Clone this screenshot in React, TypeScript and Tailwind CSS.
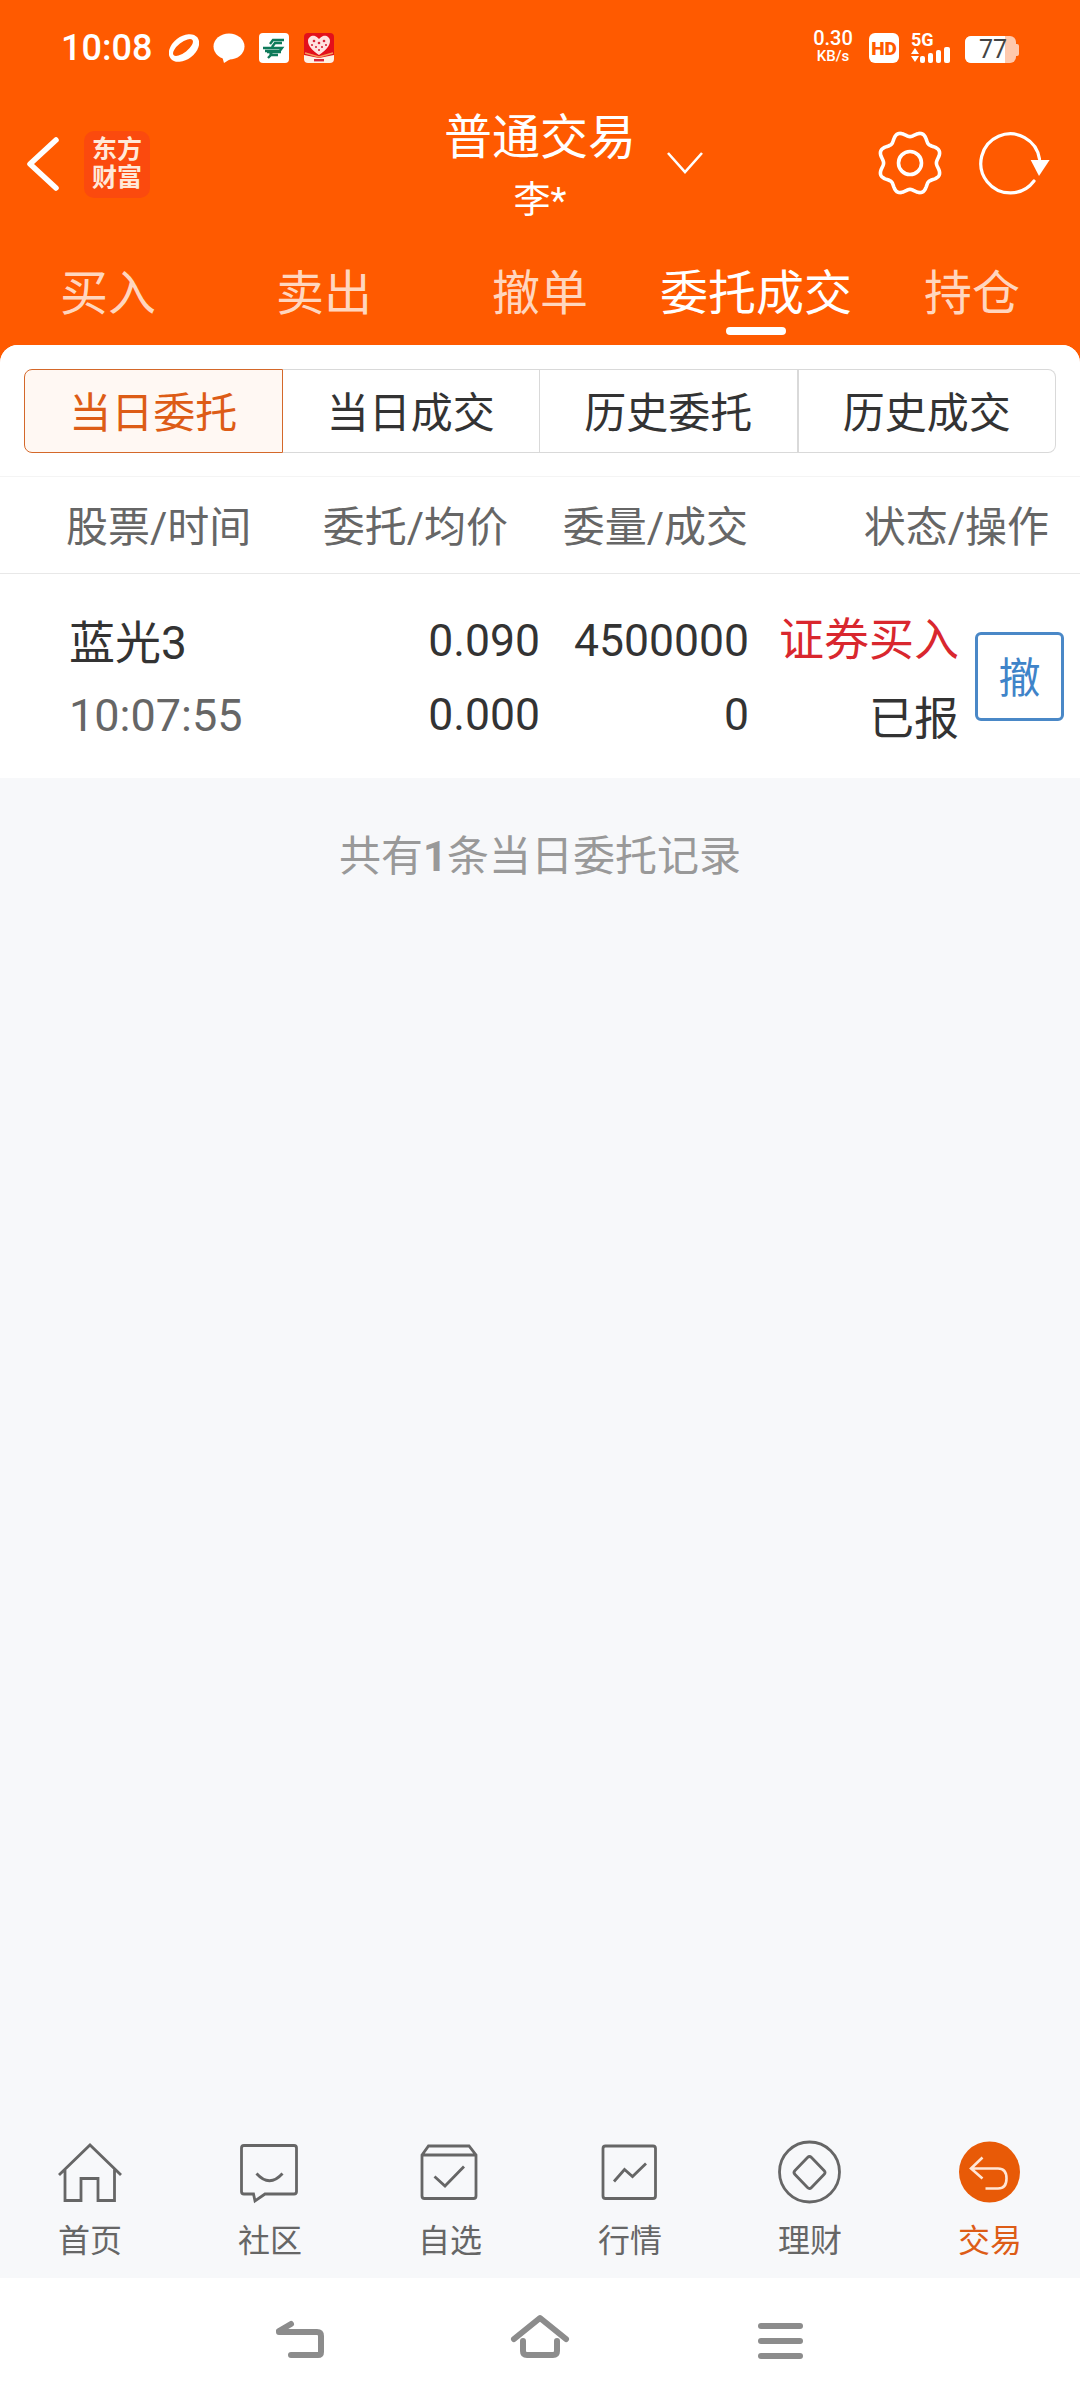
import React from 'react';

const gearPath = (() => {
  const pts: string[] = [];
  for (let i = 0; i < 160; i++) {
    const t = (i / 160) * Math.PI * 2;
    const r = 29 - 2.6 * Math.cos(8 * t);
    pts.push(`${(33 + r * Math.sin(t)).toFixed(2)} ${(33 - r * Math.cos(t)).toFixed(2)}`);
  }
  return `M${pts.join('L')}Z`;
})();

const StatusBar: React.FC = () => (
  <div className="flex items-center h-[96px] pl-[61px] text-white">
    <span className="w-[108px] text-[36px] leading-none font-medium">10:08</span>
    <svg width="30" height="30" viewBox="0 0 30 30">
      <ellipse cx="15" cy="15" rx="17" ry="11.5" fill="white" transform="rotate(-38 15 15)" />
      <ellipse cx="14" cy="14.5" rx="12" ry="5" fill="#ff5a00" transform="rotate(-38 14 14.5)" />
    </svg>
    <svg className="ml-[14px]" width="32" height="30" viewBox="0 0 32 30">
      <ellipse cx="16" cy="13.5" rx="15.5" ry="13" fill="white" />
      <path d="M9 23 L11 30 L19 25Z" fill="white" />
    </svg>
    <div className="ml-[14px] flex items-center justify-center w-[30px] h-[30px] rounded-[4px] bg-white">
      <svg width="24" height="24" viewBox="0 0 24 24" fill="none" stroke="#0f7a5a" strokeWidth="2.4">
        <path d="M8 8 L11 4 H22 M10 11 L13 7 H20 M1 12 H20 L17 16 H5 M3 15 H17 M8 19 L10 16 H19 M6 22 L9 19 H16" />
      </svg>
    </div>
    <div className="ml-[15px] w-[30px] h-[30px] rounded-[4px] bg-[#e3101b] overflow-hidden flex flex-col items-center">
      <svg width="30" height="30" viewBox="0 0 30 30">
        <path d="M15 22 C8 17 4 13 4 8 C4 4 8 2 11 3 C13 4 14 5 15 6 C16 5 17 4 19 3 C22 2 26 4 26 8 C26 13 22 17 15 22Z" fill="#ffe3e0" />
        <g fill="#d8263a">
          <circle cx="10" cy="8" r="1.3" /><circle cx="15" cy="10" r="1.3" /><circle cx="20" cy="8" r="1.3" />
          <circle cx="8" cy="12" r="1.1" /><circle cx="12" cy="14" r="1.1" /><circle cx="18" cy="14" r="1.1" />
          <circle cx="22" cy="12" r="1.1" /><circle cx="15" cy="17" r="1.1" />
        </g>
        <path d="M0 22 L15 25 L30 22 V30 H0Z" fill="#fff1e3" />
        <path d="M1 20 L15 24 L29 20" stroke="#f59a5b" strokeWidth="1.6" fill="none" />
        <rect x="10" y="26" width="10" height="2.4" fill="#d8263a" />
      </svg>
    </div>
    <div className="ml-[479px] w-[40px] flex flex-col items-center font-medium">
      <span className="text-[20px] leading-[19px] -mt-[3px]">0.30</span>
      <span className="text-[15px] leading-[15px] mt-[1px] whitespace-nowrap">KB/s</span>
    </div>
    <div className="ml-[16px] flex items-center justify-center w-[30px] h-[30px] rounded-[6px] bg-white text-[#ff5a00] text-[19px] font-black leading-none">
      HD
    </div>
    <div className="ml-[12px] relative w-[44px] h-[30px]">
      <span className="absolute left-0 -top-[2px] text-[18px] leading-[17px] font-bold">5G</span>
      <svg className="absolute left-0 bottom-0" width="44" height="16" viewBox="0 0 44 16" fill="white">
        <path d="M0 7 L4 1 L8 7Z M0 9 H8 L4 15Z" />
        <rect x="9" y="9" width="5" height="7" rx="2" />
        <rect x="17" y="6" width="5" height="10" rx="2" />
        <rect x="25" y="3" width="5" height="13" rx="2" />
        <rect x="33" y="0" width="6" height="16" rx="2" />
      </svg>
    </div>
    <div className="ml-[10px] flex items-center w-[54px] h-[27px] mt-[3px]">
      <div className="relative w-[51px] h-full rounded-[6px] bg-[#ffc9ad] overflow-hidden">
        <div className="w-[40px] h-full bg-white" />
        <span className="absolute left-[14px] top-0 text-[#444] text-[25px] leading-[27px]">77</span>
      </div>
      <div className="w-[3px] h-[12px] rounded-r-[2px] bg-[#ffc9ad]" />
    </div>
  </div>
);

const TitleBar: React.FC = () => (
  <div className="flex items-start h-[136px] text-white">
    <div className="flex items-center w-[446px] h-full pl-[24px]">
      <svg width="36" height="56" viewBox="0 0 36 56" fill="none" stroke="white" strokeWidth="5.5" strokeLinecap="round" strokeLinejoin="round">
        <path d="M32 4 L6 28 L32 52" />
      </svg>
      <div className="ml-[24px] flex flex-col items-center justify-center w-[66px] h-[67px] rounded-[10px] bg-[#fb4a0e] text-[#ffe9d9] text-[25px] font-bold leading-[28px]">
        <span>东方</span>
        <span>财富</span>
      </div>
    </div>
    <div className="w-[188px] mt-[9px] flex flex-col items-center">
      <span className="text-[48px] leading-[66px] whitespace-nowrap">普通交易</span>
      <span className="text-[37px] leading-[60px]">李*</span>
    </div>
    <svg className="ml-[33px] mt-[55px]" width="36" height="24" viewBox="0 0 36 24" fill="none" stroke="white" strokeWidth="2.6">
      <path d="M1 2 L18 21 L35 2" />
    </svg>
    <svg className="ml-[174px] mt-[34px]" width="66" height="66" viewBox="0 0 66 66" fill="none" stroke="white" strokeWidth="3.6">
      <path d={gearPath} strokeLinejoin="round" />
      <circle cx="33" cy="33" r="11.5" />
    </svg>
    <svg className="ml-[35px] mt-[34px]" width="74" height="66" viewBox="0 0 74 66" fill="none">
      <path d="M61.5 29 A29.5 29.5 0 1 0 56 51" stroke="white" strokeWidth="3.2" strokeLinecap="round" />
      <path d="M52.7 30 H71.6 L61 46Z" fill="white" />
    </svg>
  </div>
);

const tabs = ['买入', '卖出', '撤单', '委托成交', '持仓'];

const TradeTabs: React.FC = () => (
  <div className="grid grid-cols-5 h-[113px]">
    {tabs.map((tab, i) => (
      <div key={tab} className="flex flex-col items-center pt-[32px]">
        <span className={`text-[48px] leading-[60px] whitespace-nowrap ${i === 3 ? 'text-white' : 'text-[#ffd6bf]'}`}>
          {tab}
        </span>
        {i === 3 && <div className="mt-[3px] w-[60px] h-[8px] rounded-full bg-white" />}
      </div>
    ))}
  </div>
);

const segments = ['当日委托', '当日成交', '历史委托', '历史成交'];

const SegmentTabs: React.FC = () => (
  <div className="mx-[24px] flex h-[84px]">
    {segments.map((seg, i) => (
      <div
        key={seg}
        className={`flex-1 flex items-center justify-center pt-[4px] text-[42px] border ${
          i === 0
            ? 'bg-[#fff8f3] text-[#dd5c16] border-[#d4682a] rounded-l-[8px]'
            : 'text-[#333333] border-[#d9d9d9] border-l-0'
        } ${i === 3 ? 'rounded-r-[8px]' : ''} ${i === 2 ? 'border-r-2' : ''}`}
      >
        {seg}
      </div>
    ))}
  </div>
);

const OrderTable: React.FC = () => (
  <>
    <div className="mt-[23px] flex items-center h-[98px] pt-[4px] border-t border-b border-t-[#f4f4f4] border-b-[#e8e8e8] text-[42px] text-[#666666]">
      <span className="w-[300px] pl-[66px] whitespace-nowrap">股票/时间</span>
      <span className="w-[208px] text-right whitespace-nowrap">委托/均价</span>
      <span className="w-[240px] text-right whitespace-nowrap">委量/成交</span>
      <span className="w-[301px] text-right whitespace-nowrap">状态/操作</span>
    </div>
    <div className="flex h-[204px] pt-[37px] text-[#333333]">
      <div className="w-[300px] pl-[69px] flex flex-col gap-[15px]">
        <span className="text-[46px] leading-[60px] mt-[2px] -mb-[2px]">蓝光3</span>
        <span className="text-[45px] leading-[60px] text-[#666666]">10:07:55</span>
      </div>
      <div className="w-[240px] flex flex-col gap-[14px] text-right text-[44.5px] leading-[60px]">
        <span>0.090</span>
        <span>0.000</span>
      </div>
      <div className="w-[209px] flex flex-col gap-[14px] text-right text-[44.5px] leading-[60px]">
        <span>4500000</span>
        <span>0</span>
      </div>
      <div className="w-[210px] flex flex-col gap-[15px] text-right text-[45px] leading-[60px]">
        <span className="text-[#d9272e] whitespace-nowrap">证券买入</span>
        <span className="mt-[4px]">已报</span>
      </div>
      <button className="ml-[16px] mt-[21px] w-[89px] h-[89px] flex items-center justify-center pt-[4px] rounded-[6px] border-[3px] border-[#4a88c7] text-[#3f84c9] text-[42px]">
        撤
      </button>
    </div>
  </>
);

const navItems = [
  {
    label: '首页',
    icon: (
      <path d="M1 35 L32 5 L63 35 M7 29 V60.5 H23 V38.5 H40 V60.5 H56.5 V29" />
    ),
  },
  {
    label: '社区',
    icon: (
      <>
        <path d="M6 5.5 H56 Q58.5 5.5 58.5 8 V51.5 Q58.5 54 56 54 H27 L17 61 L15.5 54 H6 Q3.5 54 3.5 51.5 V8 Q3.5 5.5 6 5.5Z" />
        <path d="M18.5 33.5 Q31.5 48 44.5 33.5" />
      </>
    ),
  },
  {
    label: '自选',
    icon: (
      <>
        <path d="M4 15 L10.5 6 H51 L58 15 V56 Q58 58.5 55.5 58.5 H6.5 Q4 58.5 4 56Z M4 15 H58" />
        <path d="M16.5 36.5 L27 46 L46 26.5" />
      </>
    ),
  },
  {
    label: '行情',
    icon: (
      <>
        <rect x="5" y="6" width="52.5" height="52.5" rx="2.5" />
        <path d="M16 41.5 L26.5 29.5 L34.5 36.5 L48 23.5" />
      </>
    ),
  },
  {
    label: '理财',
    icon: (
      <>
        <circle cx="31.5" cy="32" r="30" />
        <path d="M29.5 17.5 Q31.5 15.5 33.5 17.5 L46 30.5 Q48 32.5 46 34.5 L33.5 47.5 Q31.5 49.5 29.5 47.5 L17 34.5 Q15 32.5 17 30.5Z" />
      </>
    ),
  },
];

const BottomNav: React.FC = () => (
  <div className="mt-auto grid grid-cols-6 h-[138px]">
    {navItems.map((item) => (
      <div key={item.label} className="flex flex-col items-center">
        <svg width="64" height="64" viewBox="0 0 64 64" fill="none" stroke="#666666" strokeWidth="2.8">
          {item.icon}
        </svg>
        <span className="mt-[12px] text-[32px] leading-[50px] text-[#666666]">{item.label}</span>
      </div>
    ))}
    <div className="flex flex-col items-center">
      <svg width="64" height="64" viewBox="0 0 64 64" fill="none">
        <circle cx="31.5" cy="32" r="30.5" fill="#e85a07" />
        <path d="M24.5 17.5 L13 28.5 L24.5 38.5 M13 28.5 H40 Q48.5 28.5 48.5 38.5 Q48.5 48.5 40 48.5 H27.5" stroke="#ffe6d6" strokeWidth="2.6" />
      </svg>
      <span className="mt-[12px] text-[32px] leading-[50px] text-[#dd5c16]">交易</span>
    </div>
  </div>
);

const SystemBar: React.FC = () => (
  <div className="flex justify-center h-[126px] pt-[36px] bg-white">
    <div className="w-[240px] flex justify-center">
      <svg width="48" height="46" viewBox="0 0 48 46" fill="none" stroke="#8c8c8c" strokeWidth="6" strokeLinecap="round" strokeLinejoin="round">
        <path d="M3 17 L15 10 M3 18 H41 Q45 18 45 22 V38 Q45 41 42 41 H15" />
      </svg>
    </div>
    <div className="w-[240px] flex justify-center">
      <svg width="60" height="46" viewBox="0 0 60 46" fill="none" stroke="#8c8c8c" strokeWidth="6" strokeLinecap="round" strokeLinejoin="round">
        <path d="M4 25 L30 4 L56 25 M13 27 V37 Q13 41 17 41 H43 Q47 41 47 37 V27" />
      </svg>
    </div>
    <div className="w-[240px] flex justify-center">
      <div className="w-[45px] mt-[9px] flex flex-col gap-[9px]">
        <div className="h-[6px] rounded-full bg-[#8c8c8c]" />
        <div className="h-[6px] rounded-full bg-[#8c8c8c]" />
        <div className="h-[6px] rounded-full bg-[#8c8c8c]" />
      </div>
    </div>
  </div>
);

export default function App() {
  return (
    <div className="w-[1080px] h-[2404px] flex flex-col overflow-hidden bg-[#ff5a00] font-[family-name:Roboto,'Noto_Sans_CJK_SC',sans-serif]">
      <StatusBar />
      <TitleBar />
      <TradeTabs />
      <div className="flex-1 flex flex-col rounded-t-[18px] overflow-hidden bg-[#f7f8fa]">
        <div className="bg-white pt-[24px]">
          <SegmentTabs />
          <OrderTable />
        </div>
        <p className="mt-[49px] text-center text-[42px] leading-[60px] text-[#999999]">
          共有<span className="font-bold">1</span>条当日委托记录
        </p>
        <BottomNav />
        <SystemBar />
      </div>
    </div>
  );
}
